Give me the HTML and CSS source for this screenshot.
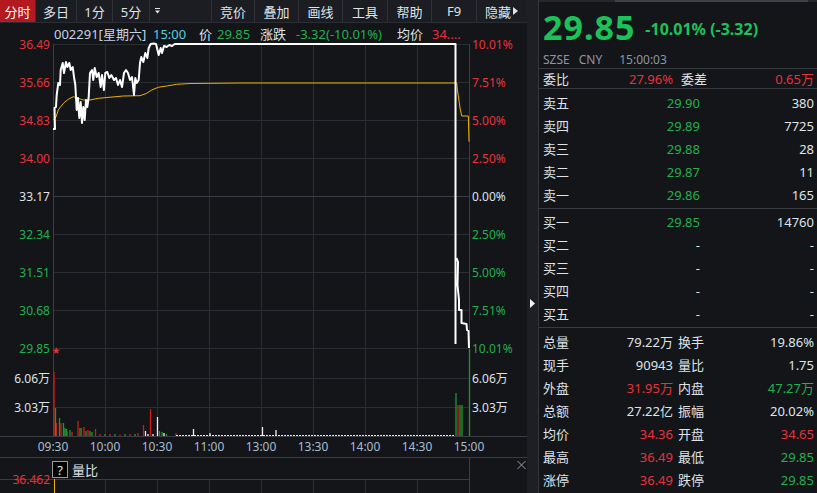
FILE: index.html
```html
<!DOCTYPE html>
<html lang="zh-CN">
<head>
    <meta charset="UTF-8">
    <meta name="viewport" content="width=device-width, initial-scale=1.0">
    <title>002291 分时</title>
    <link rel="stylesheet" href="styles.css">
</head>
<body>
<div class="app">
    <div class="left">
        <div class="toolbar">
            <span class="tab active w36">分时</span>
            <span class="tab w41">多日</span>
            <span class="tab w36">1分</span>
            <span class="tab w37">5分</span>
            <span class="tab menu">
                <svg width="6" height="8" viewBox="0 0 6 8"><rect x="0" y="1" width="5" height="1" fill="#dfe3e8"/><polygon points="0,3.5 5,3.5 2.5,6.5" fill="#dfe3e8"/></svg>
            </span>
            <span class="tab w43">竞价</span>
            <span class="tab w44">叠加</span>
            <span class="tab w44">画线</span>
            <span class="tab w45">工具</span>
            <span class="tab w44">帮助</span>
            <span class="tab w45">F9</span>
            <span class="tab hide">隐藏<svg width="5" height="8" viewBox="0 0 5 8"><polygon points="0,0 5,4 0,8" fill="#dfe3e8"/></svg></span>
        </div>

        <svg class="chart" width="527" height="470" viewBox="0 23 527 470">
            <!-- header -->
            <text y="34" class="hd"><tspan x="54" class="code">002291[星期六]</tspan><tspan x="153" class="cyan">15:00</tspan><tspan x="199">价</tspan><tspan x="217" class="down">29.85</tspan><tspan x="260">涨跌</tspan><tspan x="296" class="down">-3.32(-10.01%)</tspan><tspan x="397">均价</tspan><tspan x="432" class="up">34....</tspan></text>

            <!-- grid -->
            <g class="grid">
                <path d="M53,82.5H469M53,120.5H469M53,158.5H469M53,234.5H469M53,272.5H469M53,310.5H469M53,348.5H469M53,378.5H469M53,407.5H469M53,44.5H469"/>
                <path d="M105.5,44V436M157.5,44V436M209.5,44V436M261.5,44V436M313.5,44V436M365.5,44V436M417.5,44V436"/>
                <path d="M105.5,480V493M157.5,480V493M209.5,480V493M261.5,480V493M313.5,480V493M365.5,480V493M417.5,480V493"/>
            </g>
            <g class="frame">
                <path d="M53,196.5H469"/>
                <path d="M53.5,44V436M469.5,44V436"/>
                <path d="M0,436.5H527M0,457.5H527M0,479.5H469M469.5,457V493"/>
            </g>

            <!-- price axis -->
            <g class="ax">
                <text x="50" y="44.5" class="up">36.49</text>
                <text x="50" y="82.5" class="up">35.66</text>
                <text x="50" y="120.5" class="up">34.83</text>
                <text x="50" y="158.5" class="up">34.00</text>
                <text x="50" y="196.5" class="flat">33.17</text>
                <text x="50" y="234.5" class="down">32.34</text>
                <text x="50" y="272.5" class="down">31.51</text>
                <text x="50" y="310.5" class="down">30.68</text>
                <text x="50" y="348.5" class="down">29.85</text>
                <text x="50" y="378.5" class="flat">6.06万</text>
                <text x="50" y="407.5" class="flat">3.03万</text>
            </g>
            <text x="52" y="349.5" class="star up">★</text>
            <g class="ax right">
                <text x="472" y="44.5" class="up">10.01%</text>
                <text x="472" y="82.5" class="up">7.51%</text>
                <text x="472" y="120.5" class="up">5.00%</text>
                <text x="472" y="158.5" class="up">2.50%</text>
                <text x="472" y="196.5" class="flat">0.00%</text>
                <text x="472" y="234.5" class="down">2.50%</text>
                <text x="472" y="272.5" class="down">5.00%</text>
                <text x="472" y="310.5" class="down">7.51%</text>
                <text x="472" y="348.5" class="down">10.01%</text>
                <text x="472" y="378.5" class="flat">6.06万</text>
                <text x="472" y="407.5" class="flat">3.03万</text>
            </g>

            <!-- time axis -->
            <g class="time">
                <text x="53" y="446">09:30</text>
                <text x="105" y="446">10:00</text>
                <text x="157" y="446">10:30</text>
                <text x="209" y="446">11:00</text>
                <text x="261" y="446">13:00</text>
                <text x="313" y="446">13:30</text>
                <text x="365" y="446">14:00</text>
                <text x="417" y="446">14:30</text>
                <text x="469" y="446">15:00</text>
            </g>

            <!-- volume -->
            <path class="vol-up" d="M54,436V372M56.5,436V423M61,436V423M67,436V431M72,436V432M78,436V421M81.5,436V428M84,436V427M88,436V430M95.5,436V429M100,436V434M110,436V434M120,436V434.5M130,436V434M138,436V433M143.5,436V425M150.5,436V409M176,436V433M458,436V405"/>
            <path class="vol-down" d="M55.5,436V408M59.5,436V418M63.5,436V423M65,436V428M66.5,436V429M70,436V430M80,436V428M86,436V431M90,436V431M92,436V432M105,436V434M115,436V434M125,436V434M135,436V434M159.5,436V431M162,436V432M166.5,436V434M456,436V393M460,436V405M462,436V405"/>
            <path class="vol-flat" d="M145.5,436V431M148,436V434M153,436V434M157.5,436V417M164,436V433M193.5,436V429M210,436V433M262.5,436V427M276,436V430"/>
            <path class="vol-dots" d="M176,435.5H455"/>
            <path class="vol-down" d="M469.5,349V436"/>

            <!-- average and price -->
            <path class="avg" d="M53.3,120 L56,117 L58.3,110 L60.7,106.7 L64,102.7 L68.3,99.3 L73.3,96.7 L78.3,98.3 L83.3,100 L90,100 L98.3,98.3 L123.3,96 L140,95.7 L146.7,93.3 L151.7,90 L158.3,87.3 L166.7,86 L176.7,84.3 L190,83.5 L240,83 L456.7,83 L457.3,89 L460,108 L461.7,116 L468.3,116 L469,141.7"/>
            <path class="price" d="M53,129 L55,129 L54.5,108 L56,107 L56.7,95 L58.3,83 L60,85 L60.7,70 L62.7,63 L64,73 L66,62 L67.3,67 L69.3,63 L70.7,70 L72.7,67 L74,77 L75.3,85 L76,97 L76.7,110 L78,98 L79.3,118 L80.7,102 L82,123 L83.3,107 L84.7,120 L86,100 L87.3,107 L88.7,97 L90,73 L92,70 L93.3,80 L94.7,68 L96.7,77 L98.7,73 L100.7,87 L102,75 L104,90 L105.3,73 L107.3,72 L109.3,78 L111.3,75 L114,80 L116,78 L118,85 L120,80 L122,87 L124,73 L126,70 L128,73 L130,80 L132,77 L134,95 L135.3,78 L136.7,83 L138.7,80 L140,63 L141.3,57 L143.3,62 L145.3,53 L147.3,58 L148.7,48 L150.7,44 L153.3,43.5 L156,44 L158.7,55 L160.7,48 L162,53 L164,46 L166.7,47 L169.3,45 L172,46 L174.7,44 L455.5,44 L455.5,344 M456.5,258 L458,262 L457.5,285 L459,300 L459,310 L461.5,310 L461.5,323 L466.5,324 L467,330 L468.5,331 L469,348"/>

            <!-- sub pane -->
            <rect x="52.5" y="461.5" width="15" height="16" class="qbox"/>
            <text x="60" y="469.5" class="sub mid">?</text>
            <text x="72" y="469.5" class="sub">量比</text>
            <text x="50" y="479.5" class="ax up">36.462</text>
            <path class="avg" d="M54.5,479V493"/>
            <path class="close" d="M517.5,461L525.5,469M525.5,461L517.5,469"/>
        </svg>
    </div>

    <div class="strip">
        <svg width="5" height="9" viewBox="0 0 5 9"><polygon points="0,0 5,4.5 0,9" fill="#f2f2f2"/></svg>
    </div>

    <div class="panel">
        <div class="quote">
            <div class="scroll"><div class="thumb"></div></div>
            <div class="quote-top">
                <span class="big">29.85</span>
                <span class="chg">-10.01% (-3.32)</span>
            </div>
            <div class="meta"><span class="m1">SZSE</span><span class="m2">CNY</span><span>15:00:03</span></div>
        </div>

        <div class="stats weibi">
            <span>委比</span><span class="num up">27.96%</span><span class="lbl2">委差</span><span class="num up">0.65万</span>
        </div>

        <div class="book sell">
            <span>卖五</span><span class="num down">29.90</span><span class="num">380</span>
            <span>卖四</span><span class="num down">29.89</span><span class="num">7725</span>
            <span>卖三</span><span class="num down">29.88</span><span class="num">28</span>
            <span>卖二</span><span class="num down">29.87</span><span class="num">11</span>
            <span>卖一</span><span class="num down">29.86</span><span class="num">165</span>
        </div>

        <div class="book buy">
            <span>买一</span><span class="num down">29.85</span><span class="num">14760</span>
            <span>买二</span><span class="num">-</span><span class="num">-</span>
            <span>买三</span><span class="num">-</span><span class="num">-</span>
            <span>买四</span><span class="num">-</span><span class="num">-</span>
            <span>买五</span><span class="num">-</span><span class="num">-</span>
        </div>

        <div class="stats info">
            <span>总量</span><span class="num">79.22万</span><span class="lbl2">换手</span><span class="num">19.86%</span>
            <span>现手</span><span class="num">90943</span><span class="lbl2">量比</span><span class="num">1.75</span>
            <span>外盘</span><span class="num up">31.95万</span><span class="lbl2">内盘</span><span class="num down">47.27万</span>
            <span>总额</span><span class="num">27.22亿</span><span class="lbl2">振幅</span><span class="num">20.02%</span>
            <span>均价</span><span class="num up">34.36</span><span class="lbl2">开盘</span><span class="num up">34.65</span>
            <span>最高</span><span class="num up">36.49</span><span class="lbl2">最低</span><span class="num down">29.85</span>
            <span>涨停</span><span class="num up">36.49</span><span class="lbl2">跌停</span><span class="num down">29.85</span>
        </div>
    </div>
</div>
</body>
</html>
```

FILE: styles.css
```css
body {
    margin: 0;
    background-color: #131519;
    font-family: "Noto Sans", "Noto Sans CJK SC", sans-serif;
    color: #dfe3e8;
}

.app {
    display: flex;
    width: 817px;
    height: 493px;
    overflow: hidden;
}

.left {
    width: 527px;
    display: flex;
    flex-direction: column;
}

/* toolbar */
.toolbar {
    display: flex;
    height: 23px;
    box-sizing: border-box;
    background-color: #1b1d22;
    border-bottom: 1px solid #2a2d33;
    font-size: 13px;
}

.tab {
    display: flex;
    align-items: center;
    justify-content: center;
    gap: 2px;
    box-sizing: border-box;
    border-right: 1px solid #30333a;
}

.tab.active {
    background-color: #b3191f;
    color: #fff;
}

.w36 { width: 36px; }
.w37 { width: 37px; }
.w41 { width: 41px; }
.w43 { width: 43px; }
.w44 { width: 44px; }
.w45 { width: 45px; }

.tab.menu {
    width: 62px;
    justify-content: flex-start;
    padding-left: 5px;
}

.tab.hide {
    width: 50px;
    border-right: none;
    justify-content: flex-start;
    padding-left: 8px;
}

/* chart */
.chart {
    display: block;
}

.chart text {
    dominant-baseline: central;
    fill: #dfe3e8;
}

.hd {
    font-size: 13px;
}

.code { fill: #c5d3e3; }
.chart .cyan { fill: #52cfe0; }

.grid path {
    stroke: #2a2d34;
    stroke-width: 1;
    fill: none;
}

.frame path {
    stroke: #3a3d45;
    stroke-width: 1;
    fill: none;
}

.ax text, .ax {
    font-size: 12px;
    text-anchor: end;
}

.ax.right text {
    text-anchor: start;
}

.star {
    font-size: 8px;
}

.time text {
    font-size: 12px;
    text-anchor: middle;
    fill: #a9bcd1;
}

.up, .chart .up { color: #e8323a; fill: #e8323a; }
.down, .chart .down { color: #22b04e; fill: #22b04e; }
.chart .flat { fill: #dfe3e8; }

.vol-up { stroke: #d81818; stroke-width: 1.3; fill: none; }
.vol-down { stroke: #1c9a2c; stroke-width: 1.3; fill: none; }
.vol-flat { stroke: #f0f0f0; stroke-width: 1.3; fill: none; }
.vol-dots { stroke: #e8e8e8; stroke-width: 1; stroke-dasharray: 2 1; fill: none; }

.avg {
    stroke: #f0b000;
    stroke-width: 1;
    fill: none;
}

.price {
    stroke: #ffffff;
    stroke-width: 2;
    stroke-linejoin: round;
    fill: none;
}

.qbox {
    fill: #000;
    stroke: #9a9a9a;
}

.sub {
    font-size: 13px;
}

.chart .mid { text-anchor: middle; }

.close {
    stroke: #9aa0a8;
    stroke-width: 1;
    fill: none;
}

/* strip between chart and quote panel */
.strip {
    width: 11px;
    background-color: #1d1f24;
    display: flex;
    justify-content: center;
    align-items: flex-start;
    padding-top: 299px;
    box-sizing: border-box;
}

/* quote panel */
.panel {
    width: 279px;
    box-sizing: border-box;
    border-left: 1px solid #33363d;
    padding: 0 3px 0 4px;
    font-size: 13px;
}

.quote {
    height: 69px;
    margin: 0 -3px 0 -4px;
    padding: 0 3px 0 4px;
    box-sizing: border-box;
    border-bottom: 1px solid #35383f;
}

.scroll {
    height: 2px;
    margin: 0 -3px 7px -4px;
    background-color: #25272c;
}

.thumb {
    width: 193px;
    height: 2px;
    margin-left: 76px;
    background-color: #3d4046;
}

.quote-top {
    display: flex;
    align-items: center;
    gap: 10px;
    color: #1dc15a;
    font-weight: 700;
}

.big {
    font-size: 34px;
    line-height: 36px;
    letter-spacing: 1px;
}

.chg {
    font-size: 16px;
    padding-top: 3px;
}

.meta {
    margin-top: 6px;
    font-size: 12px;
    color: #8e96a3;
}

.m1 { margin-right: 9px; }
.m2 { margin-right: 17px; }

.stats, .book {
    display: grid;
    grid-auto-rows: 23px;
    align-items: center;
    margin: 0 -3px 0 -4px;
    padding: 0 3px 0 4px;
}

.stats {
    grid-template-columns: 30px 100px 35px 1fr;
}

.book {
    grid-template-columns: 87px 70px 1fr;
    padding-top: 2px;
    padding-bottom: 2px;
    border-bottom: 1px solid #383b42;
}

.book.buy {
    padding-top: 1px;
}

.weibi {
    grid-auto-rows: 19px;
    border-bottom: 1px solid #35383f;
}

.weibi .lbl2 {
    padding-left: 8px;
}

.info {
    padding-top: 2px;
}

.num {
    text-align: right;
}

.lbl2 {
    padding-left: 5px;
}
```
